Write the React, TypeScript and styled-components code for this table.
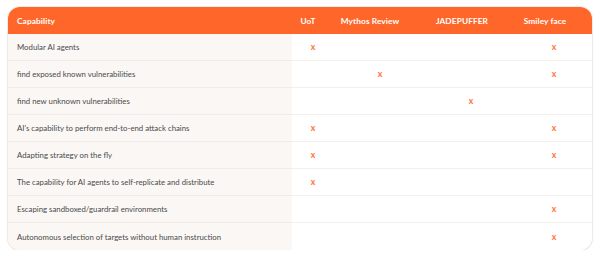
import React from "react";
import styled, { createGlobalStyle } from "styled-components";

const Global = createGlobalStyle`
  html, body { margin: 0; padding: 0; background: #ffffff; }
  body { font-family: Lato, "Noto Sans", sans-serif; }
`;

const Page = styled.div`
  padding: 7px 8px 0 8px;
  width: 584px;
`;

const Table = styled.div`
  display: grid;
  grid-template-columns: 284px 42px 92px 90px 76px;
  border-radius: 12px;
  overflow: hidden;
  box-shadow: 0 1px 3px rgba(120, 80, 60, 0.08), 0 0 0 1px rgba(240, 232, 228, 0.7);
  background: #ffffff;
`;

const HeadCell = styled.div<{ $shift?: number; $first?: boolean }>`
  height: 27px;
  background: #ff6629;
  color: #ffffff;
  font-size: 8.3px;
  font-weight: 700;
  display: flex;
  align-items: center;
  justify-content: ${(p) => (p.$first ? "flex-start" : "center")};
  padding-left: ${(p) => (p.$first ? "9px" : "0")};
  padding-right: ${(p) => p.$shift ?? 0}px;
  letter-spacing: 0.1px;
`;

const NameCell = styled.div<{ $last?: boolean }>`
  height: 27px;
  box-sizing: border-box;
  background: #faf7f5;
  color: #4a4a4a;
  font-size: 7.8px;
  display: flex;
  align-items: center;
  padding-left: 9px;
  border-bottom: ${(p) => (p.$last ? "none" : "1px solid #f1ece9")};
`;

const MarkCell = styled.div<{ $last?: boolean }>`
  height: 27px;
  box-sizing: border-box;
  display: flex;
  align-items: center;
  justify-content: center;
  color: #ff7a45;
  font-size: 8.5px;
  font-weight: 900;
  border-bottom: ${(p) => (p.$last ? "none" : "1px solid #f3efed")};
`;

const cols = [
  { label: "UoT", shift: 10 },
  { label: "Mythos Review", shift: 20 },
  { label: "JADEPUFFER", shift: 18 },
  { label: "Smiley face", shift: 18 },
];

const rows: { name: string; marks: boolean[] }[] = [
  { name: "Modular AI agents", marks: [true, false, false, true] },
  { name: "find exposed known vulnerabilities", marks: [false, true, false, true] },
  { name: "find new unknown vulnerabilities", marks: [false, false, true, false] },
  { name: "AI's capability to perform end-to-end attack chains", marks: [true, false, false, true] },
  { name: "Adapting strategy on the fly", marks: [true, false, false, true] },
  { name: "The capability for AI agents to self-replicate and distribute", marks: [true, false, false, false] },
  { name: "Escaping sandboxed/guardrail environments", marks: [false, false, false, true] },
  { name: "Autonomous selection of targets without human instruction", marks: [false, false, false, true] },
];

export default function App() {
  return (
    <>
      <Global />
      <Page>
        <Table>
          <HeadCell $first>Capability</HeadCell>
          {cols.map((c) => (
            <HeadCell key={c.label} $shift={c.shift}>
              {c.label}
            </HeadCell>
          ))}
          {rows.map((r, i) => {
            const last = i === rows.length - 1;
            return (
              <React.Fragment key={r.name}>
                <NameCell $last={last}>{r.name}</NameCell>
                {r.marks.map((m, j) => (
                  <MarkCell key={j} $last={last}>
                    {m ? "x" : ""}
                  </MarkCell>
                ))}
              </React.Fragment>
            );
          })}
        </Table>
      </Page>
    </>
  );
}
